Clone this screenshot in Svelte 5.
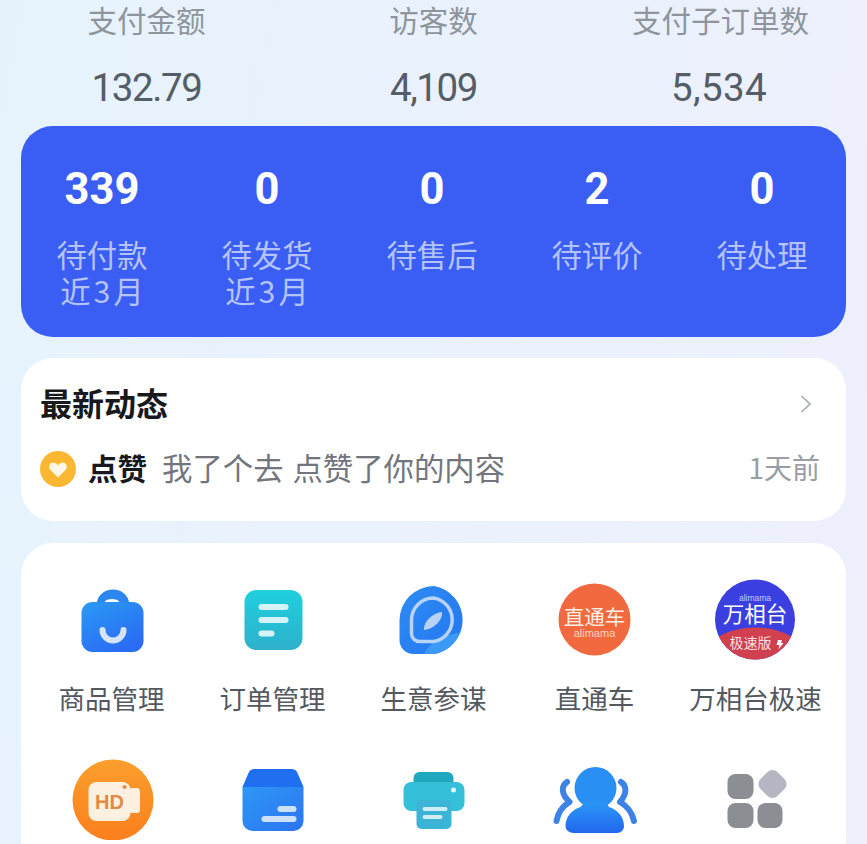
<script lang="ts">
  const stats = [
    { label: "支付金额", value: "132.79" },
    { label: "访客数", value: "4,109" },
    { label: "支付子订单数", value: "5,534" }
  ];
  const todos = [
    { count: 339, label: "待付款", sub: "近3月" },
    { count: 0, label: "待发货", sub: "近3月" },
    { count: 0, label: "待售后" },
    { count: 2, label: "待评价" },
    { count: 0, label: "待处理" }
  ];
</script>

<div class="page">
  <section class="stats">
    {#each stats as s}
      <div class="stat">
        <div class="stat-label">{s.label}</div>
        <div class="stat-value">{s.value}</div>
      </div>
    {/each}
  </section>

  <section class="todo">
    {#each todos as t}
      <div class="todo-item">
        <div class="todo-count">{t.count}</div>
        <div class="todo-label">{t.label}</div>
        {#if t.sub}<div class="todo-sub">{t.sub}</div>{/if}
      </div>
    {/each}
  </section>

  <section class="card news">
    <div class="news-head">
      <h2>最新动态</h2>
      <svg class="chevron" width="14" height="20" viewBox="0 0 14 20"><path d="M2.500 2l8.500 8-8.500 8" fill="none" stroke="#a9adb3" stroke-width="1.700"/></svg>
    </div>
    <div class="news-row">
      <svg width="36" height="36" viewBox="0 0 36 36">
        <circle cx="18" cy="18" r="18" fill="#fbb731"/>
        <path d="M18 26.500l-7.500-7.600c-2.200-2.300-1.500-5.700 1-6.800 2.500-1.100 5-.2 6.500 2.100 1.500-2.300 4-3.200 6.500-2.100 2.500 1.100 3.200 4.500 1 6.800z" fill="#fff6e6"/>
      </svg>
      <b>点赞</b>
      <span class="news-text">我了个去 点赞了你的内容</span>
      <span class="news-time">1天前</span>
    </div>
  </section>

  <section class="card apps">
    <div class="app-grid">
      <div class="app">
        <svg class="icon" viewBox="0 0 86 86">
          <defs>
            <linearGradient id="bag" x1="0" y1="0" x2="0.6" y2="1"><stop offset="0" stop-color="#2a9af5"/><stop offset="1" stop-color="#2a6cf3"/></linearGradient>
            <linearGradient id="comp" x1="0" y1="0" x2="1" y2="1"><stop offset="0" stop-color="#2f8cf3"/><stop offset="1" stop-color="#2376f0"/></linearGradient>
            <clipPath id="leaf"><path d="M43 12a34.500 34.500 0 0 1 0 68H22.500a14 14 0 0 1-14-14V46.500A34.500 34.500 0 0 1 43 12z"/></clipPath>
          </defs>
          <path d="M27.500 32c0-22 33-22 33 0zM35.500 28h15c-2-4-13-4-15 0z" fill="#2b86f0" fill-rule="evenodd"/>
          <rect x="12.500" y="28" width="62" height="50" rx="11" fill="url(#bag)"/>
          <path d="M33.500 56a10.500 10.500 0 0 0 21 0" fill="none" stroke="#d5e3fb" stroke-width="6" stroke-linecap="round"/>
        </svg>
        <span>商品管理</span>
      </div>
      <div class="app">
        <svg class="icon" viewBox="0 0 86 86">
          <defs><linearGradient id="ord" x1="0" y1="0" x2="0" y2="1"><stop offset="0" stop-color="#1fd0de"/><stop offset="1" stop-color="#2eb0cc"/></linearGradient></defs>
          <rect x="14.500" y="16" width="58" height="60" rx="12" fill="url(#ord)"/>
          <rect x="28.500" y="30" width="30" height="6" rx="3" fill="#d6f4f8"/>
          <rect x="28.500" y="43" width="30" height="6" rx="3" fill="#d6f4f8"/>
          <rect x="28.500" y="56.500" width="16" height="6" rx="3" fill="#d6f4f8"/>
        </svg>
        <span>订单管理</span>
      </div>
      <div class="app">
        <svg class="icon" viewBox="0 0 86 86">
          <path d="M43 12a34.500 34.500 0 0 1 0 68H22.500a14 14 0 0 1-14-14V46.500A34.500 34.500 0 0 1 43 12z" fill="url(#comp)"/>
          <path d="M32 82c6-16 26-22 48-26v26z" fill="#3a9af6" clip-path="url(#leaf)"/>
          <path d="M42.500 24a22 22 0 0 1 0 43.500H28.500a8 8 0 0 1-8-8V46A22 22 0 0 1 42.500 24z" fill="none" stroke="#b9d3f8" stroke-width="3.500"/>
          <path d="M51 38c1 8-8 17-18.200 18 .2-9 8-16.500 18.200-18z" fill="#b9d3f8"/>
        </svg>
        <span>生意参谋</span>
      </div>
      <div class="app">
        <svg class="icon" viewBox="0 0 86 86">
          <circle cx="42.500" cy="45.500" r="36" fill="#f0693f"/>
          <text x="42.500" y="51" text-anchor="middle" class="ztc">直通车</text>
          <text x="42.500" y="62.500" text-anchor="middle" class="ali">alimama</text>
        </svg>
        <span>直通车</span>
      </div>
      <div class="app">
        <svg class="icon" viewBox="0 0 86 86">
          <clipPath id="wx"><circle cx="42" cy="45.500" r="40"/></clipPath>
          <circle cx="42" cy="45.500" r="40" fill="#3b3fe0"/>
          <path d="M0 67c20-18 64-18 84 0v21H0z" fill="#d0404f" clip-path="url(#wx)"/>
          <text x="42" y="27" text-anchor="middle" class="ali small">alimama</text>
          <text x="42" y="48" text-anchor="middle" class="wxt">万相台</text>
          <text x="37.500" y="74" text-anchor="middle" class="jsb">极速版</text>
          <path d="M65 66h4l-1 3h2.500l-5 6.500.8-4.500h-2.800z" fill="#fff"/>
        </svg>
        <span>万相台极速</span>
      </div>

      <div class="app">
        <svg class="icon" viewBox="0 0 86 86">
          <defs><linearGradient id="hd" x1="0" y1="0" x2="0" y2="1"><stop offset="0" stop-color="#fb9f2c"/><stop offset="1" stop-color="#fb7f1d"/></linearGradient></defs>
          <circle cx="44" cy="46" r="40.500" fill="url(#hd)"/>
          <rect x="60" y="34" width="11" height="25" rx="3.500" fill="#fdf0e0"/>
          <rect x="19.500" y="28" width="42" height="39" rx="8" fill="#fdf0e0"/>
          <text x="40.500" y="55" text-anchor="middle" class="hd-text">HD</text>
          <circle cx="55.500" cy="33" r="2" fill="#e88b3f"/>
        </svg>
      </div>
      <div class="app">
        <svg class="icon" viewBox="0 0 86 86">
          <defs><linearGradient id="box" x1="0" y1="0" x2="1" y2="1"><stop offset="0" stop-color="#2e97f5"/><stop offset="1" stop-color="#2c74f1"/></linearGradient></defs>
          <path d="M12.500 33l6-14c1-2.500 3-4 6-4h37c3 0 5 1.500 6 4l6 14z" fill="#1f6ff0"/>
          <path d="M12.500 33h61v34a10 10 0 0 1-10 10h-41a10 10 0 0 1-10-10z" fill="url(#box)"/>
          <rect x="47.500" y="52" width="19" height="6" rx="3" fill="#cfe0fb"/>
          <rect x="31.500" y="62" width="35" height="6" rx="3" fill="#cfe0fb"/>
        </svg>
      </div>
      <div class="app">
        <svg class="icon" viewBox="0 0 86 86">
          <path d="M22.500 41V24a6 6 0 0 1 6-6h28a6 6 0 0 1 6 6v17z" fill="#1fa8bf"/>
          <rect x="12.500" y="28" width="61" height="29" rx="8" fill="#35c0da"/>
          <rect x="25.500" y="46" width="35" height="29" rx="5" fill="#3cb4d8"/>
          <circle cx="62.500" cy="36" r="2.500" fill="#e4f8fb"/>
          <rect x="31.500" y="53" width="25" height="4" rx="2" fill="#cdeef6"/>
          <rect x="31.500" y="61" width="20" height="4" rx="2" fill="#cdeef6"/>
        </svg>
      </div>
      <div class="app">
        <svg class="icon" viewBox="0 0 86 86">
          <defs><linearGradient id="usr" x1="0" y1="0" x2="0" y2="1"><stop offset="0" stop-color="#2a97f5"/><stop offset="1" stop-color="#2268ef"/></linearGradient></defs>
          <circle cx="43.500" cy="34" r="21" fill="#2a8ff4"/>
          <path d="M33 48h21l3 5c9 3 15 10 15 19 0 4-3 7-7 7H22c-5 0-8.500-3-8.500-7 0-9 6-16 15-19z" fill="url(#usr)"/>
          <path d="M15 28C9 32 9 40 17.500 48 11 52 6 58 4.500 67M69 28c6 4 6 12-1 20 7 4 12 10 14 19" fill="none" stroke="#3f82e6" stroke-width="6" stroke-linecap="round" stroke-linejoin="round"/>
        </svg>
      </div>
      <div class="app">
        <svg class="icon" viewBox="0 0 86 86">
          <rect x="14.500" y="20" width="26" height="25" rx="8" fill="#8b8e93"/>
          <rect x="47.500" y="18" width="24" height="24" rx="7" fill="#b4b6c4" transform="rotate(45 59.500 30)"/>
          <rect x="14.500" y="49" width="26" height="25" rx="8" fill="#8b8e93"/>
          <rect x="44.500" y="49" width="25" height="25" rx="8" fill="#8b8e93"/>
        </svg>
      </div>
    </div>
  </section>
</div>

<style>
  :global(body) {
    margin: 0;
    background: #eaf1fc;
    overflow: hidden;
  }

  .page {
    height: 844px;
    overflow: hidden;
    box-sizing: border-box;
    padding: 0 21px;
    background: linear-gradient(100deg, #e6f3fd, #eef0fc);
    font-family: "Noto Sans CJK SC", "Noto Sans", sans-serif;
  }

  .stats {
    display: grid;
    grid-template-columns: repeat(3, 287px);
    margin: -3px 0 0 -18px;
    height: 129px;
  }

  .stat {
    text-align: center;
  }

  .stat-label {
    font-size: 29.5px;
    line-height: 44px;
    color: #8f959c;
  }

  .stat-value {
    font-family: Roboto, sans-serif;
    font-size: 38.5px;
    letter-spacing: -1.4px;
    line-height: 44px;
    margin-top: 25px;
    color: #555d66;
  }

  .stat:last-child .stat-value {
    letter-spacing: 0.4px;
    margin-right: 3px;
  }

  .todo {
    display: grid;
    grid-template-columns: repeat(5, 1fr);
    height: 211px;
    background: #3a5ef4;
    border-radius: 32px;
    text-align: center;
  }

  .todo-item {
    margin-left: -3px;
  }

  .todo-count {
    font-family: Roboto, sans-serif;
    font-weight: 700;
    font-size: 43.5px;
    line-height: 50px;
    margin-top: 39px;
    color: #fff;
  }

  .todo-label,
  .todo-sub {
    font-size: 30.3px;
    line-height: 36px;
    color: #b4c3fb;
  }

  .todo-label {
    margin-top: 21px;
  }

  .todo-sub {
    letter-spacing: 3px;
    padding-left: 3px;
  }

  .card {
    background: #fff;
    border-radius: 32px;
  }

  .news {
    height: 163px;
    margin-top: 21px;
    box-sizing: border-box;
    padding: 24px 26px 0 19px;
  }

  .news-head {
    display: flex;
    justify-content: space-between;
    align-items: center;
    height: 40px;
  }

  .chevron {
    margin: 4px 7px 0 0;
  }

  .news-head h2 {
    margin: 0;
    font-size: 32px;
    line-height: 40px;
    font-weight: 700;
    color: #17191c;
  }

  .news-row {
    display: flex;
    align-items: center;
    height: 40px;
    margin-top: 25px;
  }

  .news-row svg {
    margin-top: 4px;
  }

  .news-row b {
    margin-left: 12px;
    font-size: 29.5px;
    font-weight: 700;
    color: #17191c;
  }

  .news-text {
    margin-left: 15px;
    font-size: 30.4px;
    word-spacing: 2px;
    color: #72767c;
  }

  .news-time {
    margin-left: auto;
    font-size: 28px;
    color: #9a9ea4;
  }

  .apps {
    margin-top: 22px;
    height: 400px;
    padding: 0 10px;
  }

  .app-grid {
    display: grid;
    grid-template-columns: repeat(5, 161px);
    grid-auto-rows: 180px;
    padding-top: 31px;
  }

  .app {
    display: flex;
    flex-direction: column;
    align-items: center;
  }

  .icon {
    display: block;
    width: 86px;
    height: 86px;
    flex: none;
  }

  .app span {
    margin-top: 18px;
    font-size: 26.5px;
    line-height: 40px;
    white-space: nowrap;
    color: #53585f;
  }

  .ztc {
    font-size: 20.5px;
    fill: #fdeee6;
  }

  .ali {
    font-family: "Liberation Sans", sans-serif;
    font-size: 11px;
    fill: #fbd3c2;
  }

  .ali.small {
    fill: #c7c8f5;
    font-size: 8.5px;
  }

  .wxt {
    font-size: 21.5px;
    fill: #fff;
  }

  .jsb {
    font-size: 14px;
    fill: #f7dfe2;
  }

  .hd-text {
    font-family: "Liberation Sans", sans-serif;
    font-weight: 700;
    font-size: 20px;
    fill: #e28a45;
  }
</style>
